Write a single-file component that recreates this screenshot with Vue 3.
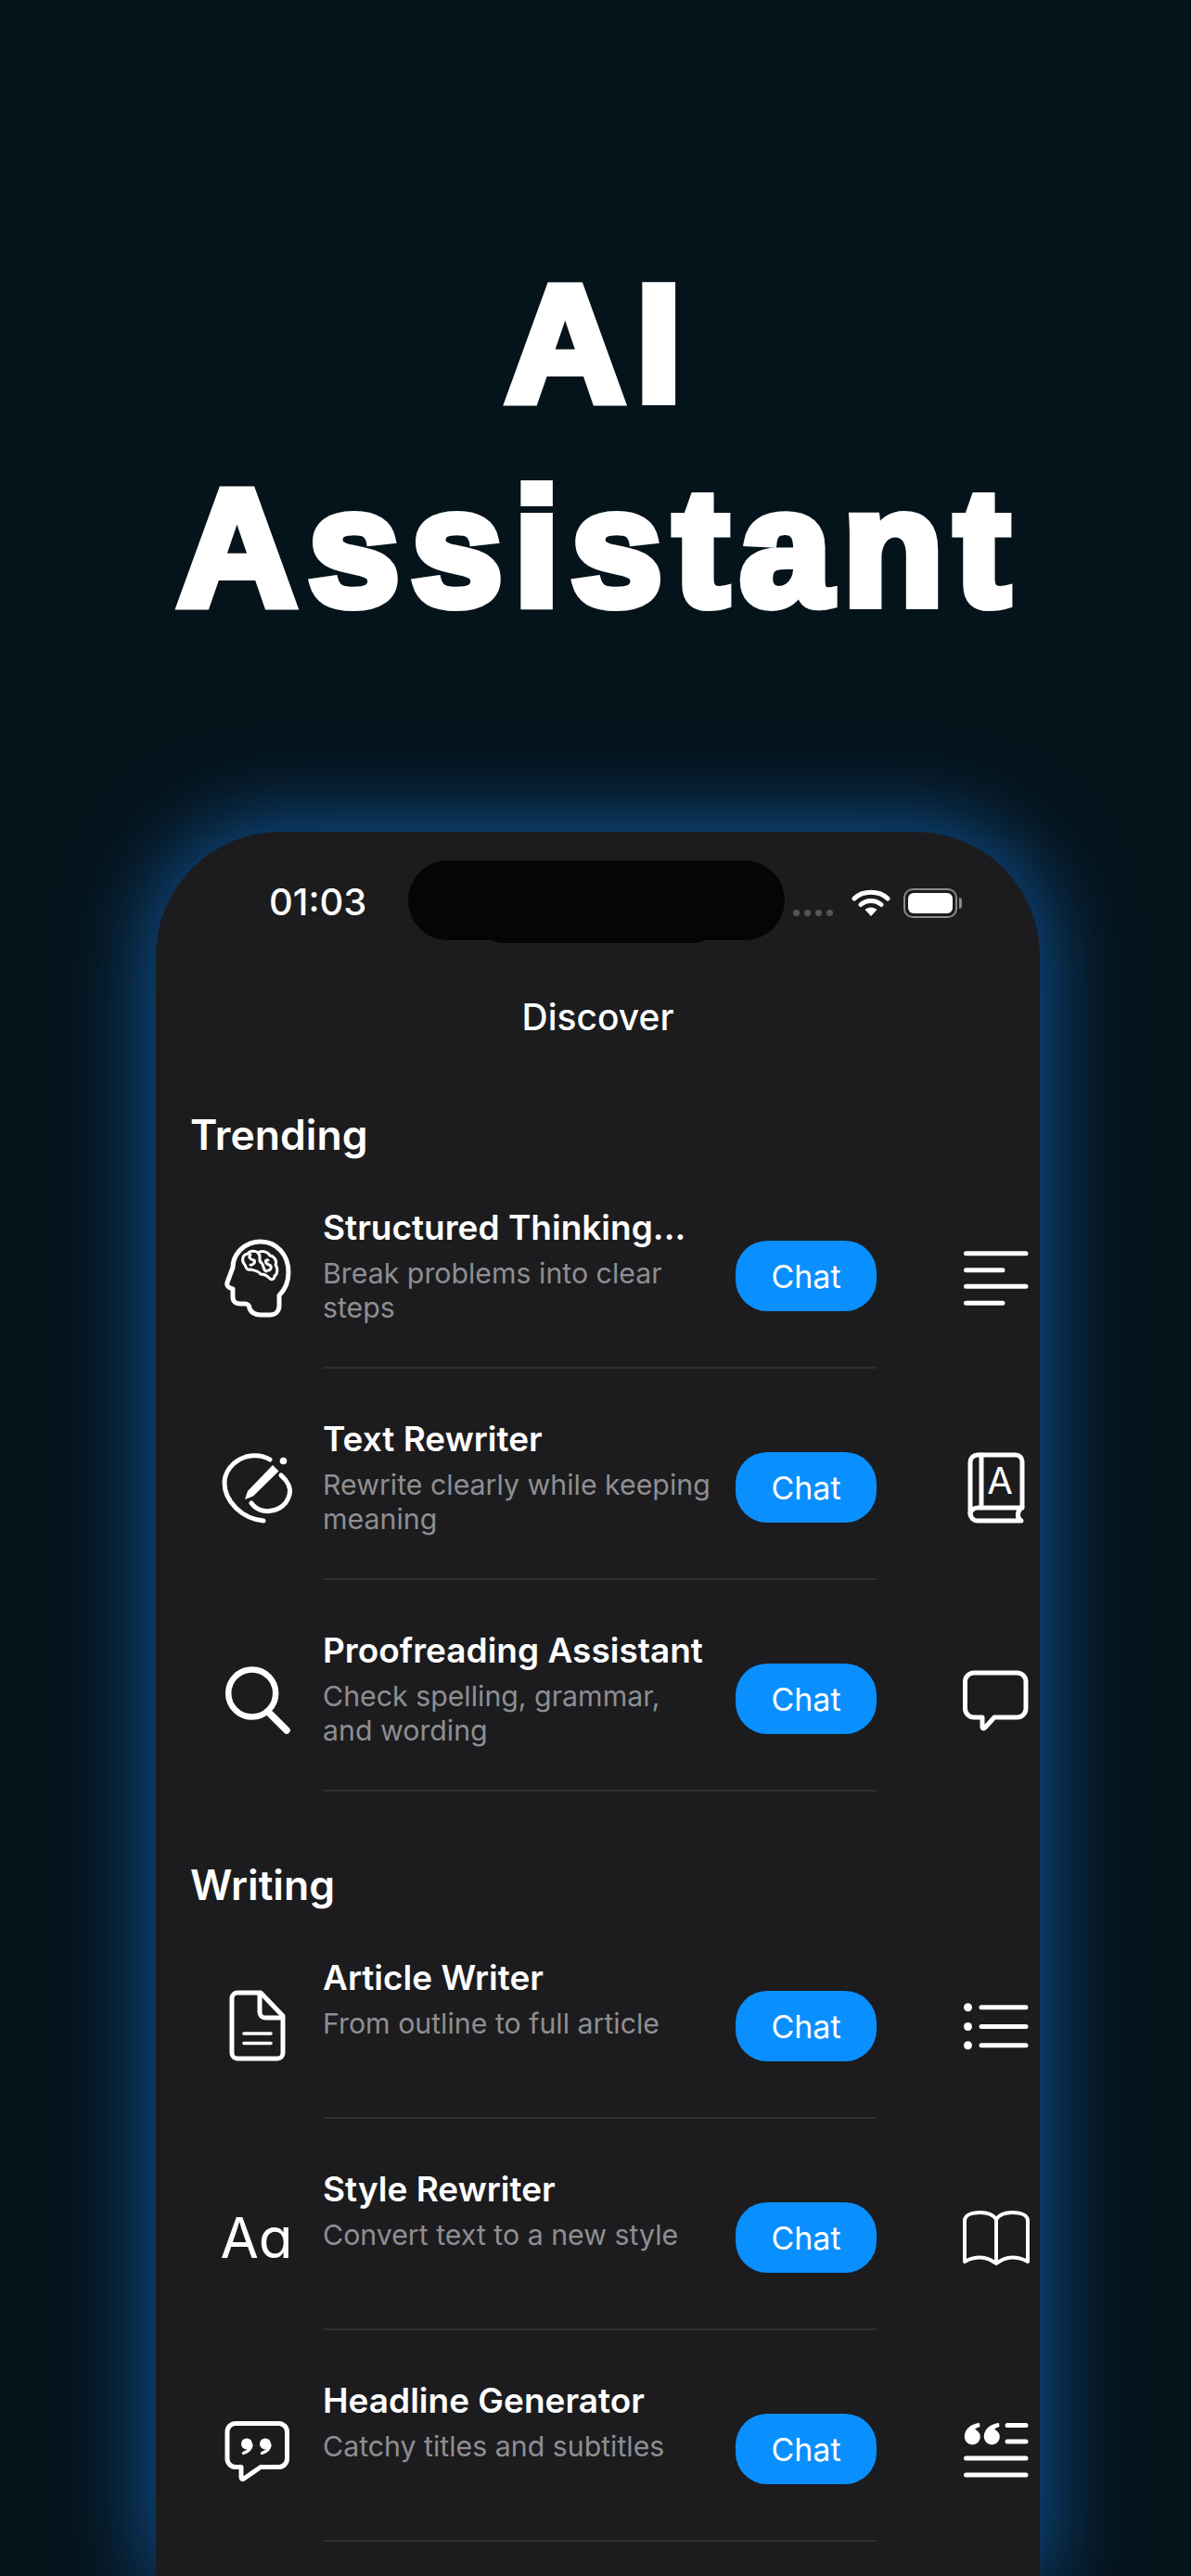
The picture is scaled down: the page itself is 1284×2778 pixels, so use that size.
<template>
  <div class="page">
    <h1 class="headline">AI<br />Assistant</h1>

    <div class="phone">
      <div class="island"><span class="island-lip"></span></div>

      <div class="status-bar">
        <span class="time">01:03</span>
        <div class="status-icons">
          <span class="cell-dots"><i></i><i></i><i></i><i></i></span>
          <svg class="wifi" width="42" height="30" viewBox="0 0 42 30">
            <path d="M3 10 C12 1 30 1 39 10" fill="none" stroke="#fff" stroke-width="5" stroke-linecap="round" />
            <path d="M10 16.5 C16 11 26 11 32 16.5" fill="none" stroke="#fff" stroke-width="5" stroke-linecap="round" />
            <path d="M21 29 L14.5 22 C18 18.6 24 18.6 27.5 22 Z" fill="#fff" />
          </svg>
          <span class="battery"><span class="battery-fill"></span></span>
        </div>
      </div>

      <div class="nav-title">Discover</div>

      <section v-for="section in sections" :key="section.name" class="section">
        <h2 class="section-title">{{ section.name }}</h2>
        <div v-for="row in section.rows" :key="row.title" class="row">
          <div class="row-icon">
            <span v-if="row.icon === 'aa'" class="aa-icon">Aa</span>
            <svg v-else class="glyph" width="80" height="90" viewBox="0 0 80 90">
              <g v-if="row.icon === 'brain'">
                <path d="M14 59 V68 C14 73 18 75 22 75 H27 C30 75 32 77 32 80 C34 85 38 87 44 87 H54 C60 87 64 83 64 77 V66 C70 60 74 51 74 41 C74 22 61 8 44 8 C27 8 14 21 14 36 L8 52 C7 55 9 58 14 59 Z" />
                <path class="thin" d="M27 33 C23 29 24 22 30 21 C33 17 39 18 41 20 C45 17 52 19 54 23 C59 24 62 29 60 33 C63 37 62 44 59 45 C59 49 55 50 53 47 C50 44 47 43 44 43 C41 39 36 39 33 38 C30 39 28 36 27 33 Z" />
                <path class="thin" d="M33 22 C30 25 34 28 37 28 C39 31 34 34 33 33 M41 20 C46 24 40 28 45 31 C48 34 46 38 50 40 M52 28 C48 27 49 32 53 33 C57 34 55 39 52 39" />
              </g>
              <g v-else-if="row.icon === 'pencil'">
                <path d="M54 15 C46 10 36 10 28 12 C13 17 5 29 5 40 C5 60 24 79 47 81" />
                <path d="M66 32 C73 38 77 46 75 53 C72 66 58 73 46 70 C41 69 37 66 34 62" />
                <path class="fill" d="M27 58 L30 49 L57 21 L63.5 27.5 L36 54.5 Z" />
                <circle class="fill" cx="68.5" cy="16.5" r="3.8" />
              </g>
              <g v-else-if="row.icon === 'search'">
                <circle cx="34.7" cy="39" r="25.5" stroke-width="6.5" />
                <path d="M52 59 L72 79" stroke-width="7.5" />
              </g>
              <g v-else-if="row.icon === 'doc'">
                <path d="M19 9 H44 L68 34 V74 a6 6 0 0 1 -6 6 H19 a6 6 0 0 1 -6 -6 V15 a6 6 0 0 1 6 -6 Z" />
                <path d="M43 10 V30 a6 6 0 0 0 6 6 H67" />
                <path d="M26 53 H55 M26 63.5 H55" stroke-width="3.6" />
              </g>
              <g v-else-if="row.icon === 'quote-bubble'">
                <path d="M17 17.5 H63.5 a9 9 0 0 1 9 9 V55.5 a9 9 0 0 1 -9 9 H44 L26 77 C24.5 78 23 77.5 23 75.5 V64.5 H17 a9 9 0 0 1 -9 -9 V26.5 a9 9 0 0 1 9 -9 Z" />
                <circle class="fill" cx="29" cy="39.5" r="6" />
                <circle class="fill" cx="49" cy="39.5" r="6" />
                <path d="M34 41 C33.5 45 30 48 25.5 49.5 M54 41 C53.5 45 50 48 45.5 49.5" stroke-width="3.4" />
              </g>
            </svg>
          </div>

          <div class="row-body">
            <div class="row-text">
              <div class="row-title">{{ row.title }}</div>
              <div class="row-desc">{{ row.desc }}</div>
            </div>
            <button class="chat-btn">Chat</button>
          </div>

          <div class="row-peek">
            <svg class="glyph" width="80" height="90" viewBox="0 0 80 90">
              <g v-if="row.peek === 'lines'">
                <path d="M8.5 20.8 H73 M8.5 38.7 H48 M8.5 56.3 H73 M8.5 74.3 H48" stroke-width="5" />
              </g>
              <g v-else-if="row.peek === 'book-a'">
                <path d="M69 17 a7 7 0 0 0 -7 -7 H21 a8 8 0 0 0 -8 8 V73 a8 8 0 0 0 8 8 H68 C63 78 63 71 69 66 Z" />
                <path d="M25 10 V67 M69 67 H21 a8 7 0 0 0 -8 7" />
                <text x="45" y="52" class="svg-letter" text-anchor="middle">A</text>
              </g>
              <g v-else-if="row.peek === 'bubble'">
                <path d="M17 17 H63.5 a9.5 9.5 0 0 1 9.5 9.5 V55.5 a9.5 9.5 0 0 1 -9.5 9.5 H39 L29 76 C27.5 77.5 26 77 26 75 V65 H17 a9.5 9.5 0 0 1 -9.5 -9.5 V26.5 a9.5 9.5 0 0 1 9.5 -9.5 Z" />
              </g>
              <g v-else-if="row.peek === 'list'">
                <circle class="fill" cx="10.5" cy="24.8" r="4.5" />
                <circle class="fill" cx="10.5" cy="45.5" r="4.5" />
                <circle class="fill" cx="10.5" cy="65.8" r="4.5" />
                <path d="M25 24.8 H73 M25 45.5 H73 M25 65.8 H73" stroke-width="5" />
              </g>
              <g v-else-if="row.peek === 'open-book'">
                <path d="M7 71 V27 C7 22 12 18 24 18 C33 18 38 21 41 25 C44 21 49 18 58 18 C70 18 75 22 75 27 V71 C70 68 64 66.5 58 66.5 C50 66.5 45 70 41 73 C37 70 32 66.5 24 66.5 C18 66.5 12 68 7 71 Z M41 25 V73" stroke-width="4" />
              </g>
              <g v-else-if="row.peek === 'quote-list'">
                <circle class="fill" cx="15.3" cy="32" r="8.5" />
                <circle class="fill" cx="36.3" cy="32" r="8.5" />
                <path class="fill" d="M6.8 32 C6.8 24 13 18 23 17 L23.5 21 C18 22.5 15 26 15 30 Z M27.8 32 C27.8 24 34 18 44 17 L44.5 21 C39 22.5 36 26 36 30 Z" />
                <path d="M53 19.5 H73 M53 37 H73 M8.5 55 H73 M8.5 73 H73" stroke-width="5" />
              </g>
            </svg>
          </div>
        </div>
      </section>
    </div>
  </div>
</template>

<script setup>
const sections = [
  {
    name: 'Trending',
    rows: [
      { title: 'Structured Thinking...', desc: 'Break problems into clear steps', icon: 'brain', peek: 'lines' },
      { title: 'Text Rewriter', desc: 'Rewrite clearly while keeping meaning', icon: 'pencil', peek: 'book-a' },
      { title: 'Proofreading Assistant', desc: 'Check spelling, grammar, and wording', icon: 'search', peek: 'bubble' },
    ],
  },
  {
    name: 'Writing',
    rows: [
      { title: 'Article Writer', desc: 'From outline to full article', icon: 'doc', peek: 'list' },
      { title: 'Style Rewriter', desc: 'Convert text to a new style', icon: 'aa', peek: 'open-book' },
      { title: 'Headline Generator', desc: 'Catchy titles and subtitles', icon: 'quote-bubble', peek: 'quote-list' },
    ],
  },
]
</script>

<style>
body {
  margin: 0;
  background: #05131b;
}
</style>

<style scoped>
.page {
  width: 1284px;
  height: 2778px;
  display: flex;
  flex-direction: column;
  align-items: center;
  overflow: hidden;
  background: #05131b;
  font-family: Inter, "Noto Sans", sans-serif;
  color: #fff;
}

.headline {
  flex-shrink: 0;
  margin: 0;
  padding: 261px 0 0 8px;
  height: 897px;
  box-sizing: border-box;
  font-family: "Liberation Sans", Arial, sans-serif;
  font-size: 178px;
  line-height: 220px;
  font-weight: 700;
  letter-spacing: 12px;
  text-align: center;
  -webkit-text-stroke: 10px #fff;
}

.phone {
  position: relative;
  flex: 1;
  min-height: 0;
  width: 953px;
  margin-left: 5px;
  box-sizing: border-box;
  background: #1c1c1e;
  border-radius: 134px 134px 0 0;
  box-shadow: 0 0 90px 12px #10508f;
}

.island {
  position: absolute;
  top: 31px;
  left: 272px;
  width: 406px;
  height: 86px;
  border-radius: 43px;
  background: #050505;
}

.island-lip {
  position: absolute;
  left: 82px;
  bottom: -3px;
  width: 246px;
  height: 20px;
  border-radius: 0 0 30px 30px;
  background: #050505;
}

.status-bar {
  height: 150px;
  padding: 51px 89px 0 122px;
  box-sizing: border-box;
  display: flex;
  justify-content: space-between;
  align-items: flex-start;
}

.time {
  font-size: 40px;
  line-height: 50px;
  font-weight: 500;
}

.status-icons {
  display: flex;
  align-items: center;
  gap: 14px;
  padding-top: 10px;
}

.cell-dots {
  display: flex;
  gap: 5px;
  align-self: flex-end;
  margin-bottom: 2px;
  margin-right: 6px;
}

.cell-dots i {
  width: 7px;
  height: 7px;
  border-radius: 50%;
  background: #555;
}

.battery {
  width: 58px;
  height: 32px;
  box-sizing: border-box;
  border: 2px solid #8a8a8e;
  border-radius: 10px;
  padding: 3px;
  display: flex;
  position: relative;
}

.battery::after {
  content: '';
  position: absolute;
  right: -7px;
  top: 8px;
  width: 3px;
  height: 12px;
  border-radius: 0 3px 3px 0;
  background: #8a8a8e;
}

.battery-fill {
  flex: 1;
  border-radius: 6px;
  background: #fff;
}

.nav-title {
  text-align: center;
  font-size: 39px;
  line-height: 48px;
  font-weight: 500;
  margin-top: 26px;
}

.section {
  padding-left: 39px;
  margin-top: 81px;
}

.section + .section {
  margin-top: 79px;
}

.section-title {
  margin: 0 0 2px -2px;
  font-size: 44.5px;
  line-height: 44px;
  font-weight: 600;
}

.row {
  display: flex;
  height: 228px;
}

.row-icon {
  width: 141px;
  box-sizing: border-box;
  padding: 83px 2px 0 0;
  flex-shrink: 0;
  display: flex;
  align-items: flex-start;
  justify-content: center;
}

.row-body {
  width: 597px;
  flex-shrink: 0;
  height: 228px;
  box-sizing: border-box;
  padding-top: 53px;
  border-bottom: 2px solid #2e2e32;
  display: flex;
  align-items: flex-start;
  justify-content: space-between;
}

.row-text {
  width: 425px;
}

.row-title {
  font-size: 37px;
  line-height: 46px;
  font-weight: 600;
  white-space: nowrap;
}

.row-desc {
  margin-top: 8px;
  font-size: 30.3px;
  line-height: 37px;
  color: #8e8e93;
}

.chat-btn {
  width: 152px;
  height: 76px;
  margin-top: 37px;
  flex-shrink: 0;
  border: 0;
  border-radius: 34px;
  background: #0a8fff;
  color: #fff;
  font-family: inherit;
  font-size: 34px;
  font-weight: 400;
}

.row-peek {
  width: 80px;
  margin-left: 88px;
  padding-top: 83px;
  flex-shrink: 0;
  display: flex;
  align-items: flex-start;
  justify-content: center;
}

.glyph {
  fill: none;
  stroke: #fff;
  stroke-width: 5;
  stroke-linecap: round;
  stroke-linejoin: round;
}

.glyph .fill {
  fill: #fff;
  stroke: none;
}

.glyph .thin {
  stroke-width: 3;
}

.svg-letter {
  fill: #fff;
  stroke: none;
  font-family: Inter, sans-serif;
  font-size: 40px;
}

.aa-icon {
  margin-top: 10px;
  font-size: 60px;
  line-height: 70px;
  font-feature-settings: 'cv11';
}
</style>
